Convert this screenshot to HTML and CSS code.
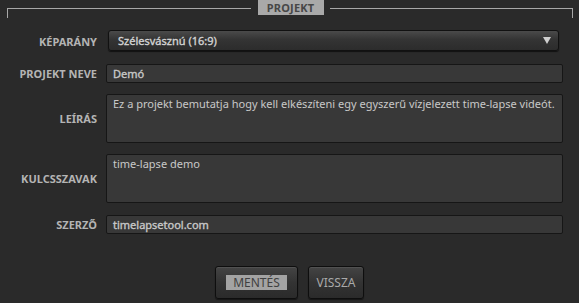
FILE: index.html
```html
<!DOCTYPE html>
<html lang="hu">
<head>
<meta charset="utf-8">
<title>Projekt</title>
<link rel="stylesheet" href="styles.css">
</head>
<body>
<div class="frame-head">
  <div class="seg seg-left"></div>
  <div class="title">PROJEKT</div>
  <div class="seg seg-right"></div>
</div>
<form class="form">
  <label class="label">KÉPARÁNY</label>
  <div class="select">
    <span class="select-text">Szélesvásznú (16:9)</span>
    <span class="arrow"></span>
  </div>
  <label class="label">PROJEKT NEVE</label>
  <div class="input">Demó</div>
  <label class="label">LEÍRÁS</label>
  <div class="textarea">Ez a projekt bemutatja hogy kell elkészíteni egy egyszerű vízjelezett time-lapse videót.</div>
  <label class="label">KULCSSZAVAK</label>
  <div class="textarea">time-lapse demo</div>
  <label class="label">SZERZŐ</label>
  <div class="input">timelapsetool.com</div>
</form>
<div class="buttons">
  <div class="btn btn-save"><span class="focus">MENTÉS</span></div>
  <div class="btn btn-back">VISSZA</div>
</div>
</body>
</html>
```
FILE: styles.css
```css
html, body {
  margin: 0;
  padding: 0;
}
body {
  width: 579px;
  height: 303px;
  overflow: hidden;
  background: #2a2a2a;
  font-family: "Noto Sans", "DejaVu Sans", sans-serif;
  font-size: 11px;
  color: #c4c4c4;
}
.frame-head {
  display: flex;
  align-items: flex-start;
  padding: 0 6px 0 7px;
  height: 15px;
}
.seg {
  flex: 1;
  margin-top: 8px;
  height: 9px;
  border-top: 1px solid #a8a8a8;
}
.seg-left {
  border-left: 1px solid #a8a8a8;
  margin-right: 7px;
}
.seg-right {
  border-right: 1px solid #a8a8a8;
  margin-left: 6px;
}
.title {
  width: 66px;
  height: 15px;
  background: #a9a9a9;
  color: #474747;
  font-weight: bold;
  font-size: 11px;
  line-height: 15px;
  text-align: center;
  letter-spacing: 0.2px;
}
.form {
  display: grid;
  grid-template-columns: 97px 457px;
  column-gap: 9px;
  row-gap: 11px;
  margin-top: 15px;
}
.label {
  display: flex;
  align-items: center;
  justify-content: flex-end;
  font-weight: bold;
  color: #b4b4b4;
  font-size: 11px;
}
.select {
  box-sizing: border-box;
  height: 21px;
  margin: 0 4px 2px 2px;
  border: 1px solid #111;
  border-radius: 3px;
  background: linear-gradient(#4a4a4a, #343434 45%, #2c2c2c);
  box-shadow: 0 1px 1px rgba(0,0,0,0.6);
  display: flex;
  align-items: center;
  justify-content: space-between;
  padding: 0 7px 0 9px;
}
.select-text {
  color: #d4d4d4;
  -webkit-text-stroke: 0.35px #d4d4d4;
}
.arrow {
  width: 0;
  height: 0;
  border-left: 4px solid transparent;
  border-right: 4px solid transparent;
  border-top: 7px solid #cfcfcf;
}
.input, .textarea {
  box-sizing: border-box;
  background: #383838;
  border: 1px solid #161616;
  border-radius: 2px;
  padding: 0 6px;
  color: #c8c8c8;
}
.input {
  height: 19px;
  line-height: 17px;
  -webkit-text-stroke: 0.35px #c8c8c8;
}
.textarea {
  height: 49px;
  padding-top: 1px;
  line-height: 16px;
}
.form .input:last-child {
  margin-top: 1px;
}
.buttons {
  display: flex;
  justify-content: center;
  gap: 10px;
  margin-top: 32px;
}
.btn {
  box-sizing: border-box;
  height: 33px;
  border: 1px solid #0e0e0e;
  border-radius: 3px;
  background: linear-gradient(#444, #333 50%, #2b2b2b);
  box-shadow: inset 0 1px 0 rgba(255,255,255,0.08), 0 1px 1px rgba(0,0,0,0.5);
  display: flex;
  align-items: center;
  justify-content: center;
  font-size: 12px;
  color: #a9a9a9;
}
.btn-save {
  width: 83px;
}
.btn-back {
  width: 56px;
}
.focus {
  background: #a3a3a3;
  color: #404040;
  padding: 0 7px;
  line-height: 15px;
}
```
